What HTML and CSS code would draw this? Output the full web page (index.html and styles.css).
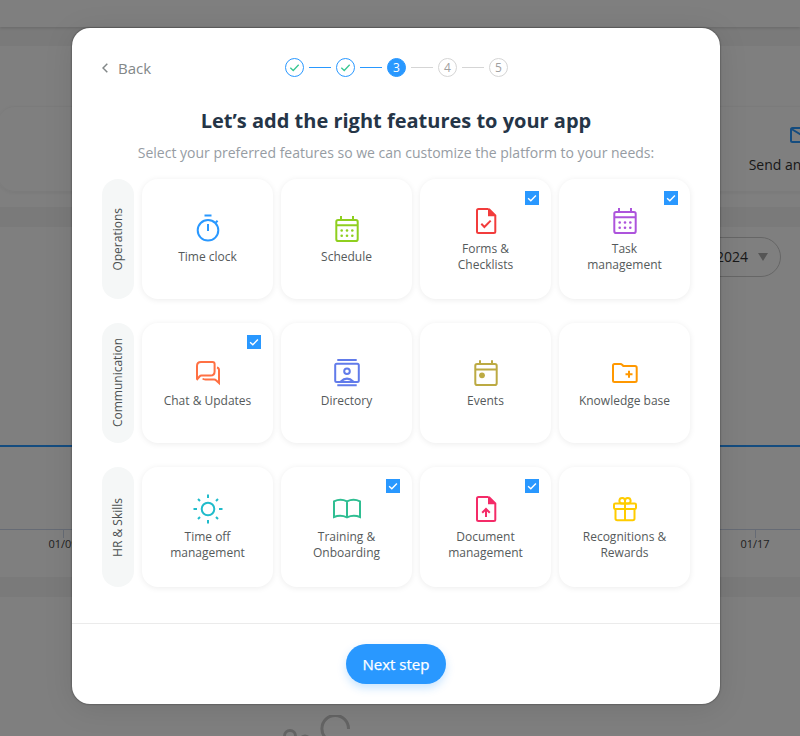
FILE: index.html
```
<!DOCTYPE html>
<html lang="en">
<head>
<meta charset="utf-8">
<title>Features</title>
<link rel="stylesheet" href="styles.css">
</head>
<body>
<svg width="0" height="0" class="defs">
  <symbol id="calendar" viewBox="0 0 32 32"><rect x="5.3" y="7" width="21.4" height="21" rx="1.8"/><path d="M5 12.3H27M10 3v4M22 3v4"/><g class="solid"><circle cx="10.7" cy="17.5" r="1.3"/><circle cx="16" cy="17.5" r="1.3"/><circle cx="21.3" cy="17.5" r="1.3"/><circle cx="10.7" cy="22.8" r="1.3"/><circle cx="16" cy="22.8" r="1.3"/><circle cx="21.3" cy="22.8" r="1.3"/></g></symbol>
  <symbol id="page" viewBox="0 0 32 32"><path d="M18.5 4H8.5Q7 4 7 5.500V26.500Q7 28 8.500 28H23.800Q25.300 28 25.300 26.500V10.500L18.800 4"/><path class="solid" d="M18 3.200L26.200 11.200H18Z"/></symbol>
  <symbol id="tick" viewBox="0 0 14 14"><path d="M3.100 7.300L5.800 9.800L10.900 4.400"/></symbol>
</svg>

<div class="app">
  <div class="topbar"></div>
  <section class="quick">
    <div class="panel left"></div>
    <div class="panel right">
      <svg width="28" height="20" viewBox="0 0 28 20"><rect x="1" y="3" width="24" height="14" rx="1.500"/><path d="M1.500 4L13 11L24.500 4"/></svg>
      <span>Send an update</span>
    </div>
  </section>
  <section class="chart">
    <div class="date"><span>01/17/2024</span><i></i></div>
    <div class="series"></div>
    <div class="axis"><span class="mark first">01/09</span><span class="mark last">01/17</span></div>
  </section>
  <section class="empty">
    <svg width="90" height="60" viewBox="0 0 90 60"><path d="M68.500 14A13.300 13.300 0 1 0 55 27"/><circle cx="10" cy="21" r="5.500"/><circle cx="25" cy="26" r="5"/></svg>
  </section>
</div>

<div class="overlay">
  <main class="modal">
    <header class="head">
      <a class="back"><svg width="6" height="10" viewBox="0 0 6 10"><path d="M5.300 .8L1 5L5.300 9.200"/></svg>Back</a>
      <div class="steps">
        <span class="step done"><svg width="15" height="15"><use href="#tick"/></svg></span><i class="link on"></i>
        <span class="step done"><svg width="15" height="15"><use href="#tick"/></svg></span><i class="link on"></i>
        <span class="step now">3</span><i class="link"></i>
        <span class="step">4</span><i class="link"></i>
        <span class="step">5</span>
      </div>
    </header>
    <h1>Let’s add the right features to your app</h1>
    <p class="lead">Select your preferred features so we can customize the platform to your needs:</p>

    <div class="groups">
      <div class="group">
        <div class="label"><span>Operations</span></div>
        <div class="card"><svg class="icon blue" viewBox="0 0 32 32"><circle cx="16" cy="17.300" r="10.300"/><path d="M12.500 2.500h7M16 11v7M23.800 9.500l1.800-1.800"/></svg><span>Time clock</span></div>
        <div class="card"><svg class="icon green"><use href="#calendar"/></svg><span>Schedule</span></div>
        <div class="card"><b class="check"><svg width="14" height="14"><use href="#tick"/></svg></b><svg class="icon red" viewBox="0 0 32 32"><use href="#page"/><path d="M11.300 18.800L14.400 22L20.700 15.600"/></svg><span>Forms &amp;<br>Checklists</span></div>
        <div class="card"><b class="check"><svg width="14" height="14"><use href="#tick"/></svg></b><svg class="icon purple"><use href="#calendar"/></svg><span>Task<br>management</span></div>
      </div>
      <div class="group">
        <div class="label"><span>Communication</span></div>
        <div class="card"><b class="check"><svg width="14" height="14"><use href="#tick"/></svg></b><svg class="icon coral" viewBox="0 0 32 32"><path d="M5 21.800V9Q5 5 9 5H20.500Q22.600 5 22.600 7V14.500Q22.600 18.600 18.500 18.600H9.500Q8.300 18.600 7.500 19.500L5.300 22.200ZM25 10.500Q27 11 27 13V26L24 23.200Q23.300 22.500 22.300 22.500H13.500Q11.500 22.500 10.700 21.500"/></svg><span>Chat &amp; Updates</span></div>
        <div class="card"><svg class="icon indigo" viewBox="0 0 32 32"><rect x="4.200" y="6.700" width="23.600" height="18.300" rx="1.500"/><path d="M6.300 3H25.700M6.300 28.300H25.700M9.500 24.800Q16 18.500 22.500 24.800"/><circle cx="16" cy="14.300" r="2.800"/></svg><span>Directory</span></div>
        <div class="card"><svg class="icon olive" viewBox="0 0 32 32"><rect x="5.300" y="7" width="21.400" height="21" rx="1.800"/><path d="M5 12.500H27M10 3.300v4M22 3.300v4"/><circle class="solid" cx="12" cy="18.300" r="2.900"/></svg><span>Events</span></div>
        <div class="card"><svg class="icon orange" viewBox="0 0 32 32"><path d="M5.500 7H11.500Q12.500 7 13.200 7.800L14.300 9H26Q27.700 9 27.700 10.700V23.500Q27.700 25 26 25H5.500Q4 25 4 23.500V8.500Q4 7 5.500 7ZM20 13.800v7M16.500 17.300h7"/></svg><span>Knowledge base</span></div>
      </div>
      <div class="group">
        <div class="label"><span>HR &amp; Skills</span></div>
        <div class="card"><svg class="icon teal" viewBox="0 0 32 32"><circle cx="16" cy="16" r="6.300"/><path d="M16 1.500v3.500M16 27v3.500M1.500 16h3.500M27 16h3.500M6 6l2 2M24 24l2 2M6 26l2-2M24 8l2-2"/></svg><span>Time off<br>management</span></div>
        <div class="card"><b class="check"><svg width="14" height="14"><use href="#tick"/></svg></b><svg class="icon mint" viewBox="0 0 32 32"><path d="M16 8.300Q9.500 5.300 3 8.300V24Q9.500 21.300 16 24.300Q22.500 21.300 29 24V8.300Q22.500 5.300 16 8.300V24.300"/></svg><span>Training &amp;<br>Onboarding</span></div>
        <div class="card"><b class="check"><svg width="14" height="14"><use href="#tick"/></svg></b><svg class="icon pink" viewBox="0 0 32 32"><use href="#page"/><path d="M16 24V16.500M12.200 19.800L16 16L19.800 19.800"/></svg><span>Document<br>management</span></div>
        <div class="card"><svg class="icon yellow" viewBox="0 0 32 32"><rect x="5" y="10.500" width="22" height="5.500" rx="1.300"/><path d="M6.500 16V25.500Q6.500 27.200 8.200 27.200H23.800Q25.500 27.200 25.500 25.500V16M16 10.500V27M16 10.500H12.800A2.800 2.800 0 1 1 16 7.700ZM16 10.500H19.200A2.800 2.800 0 1 0 16 7.700Z"/></svg><span>Recognitions &amp;<br>Rewards</span></div>
      </div>
    </div>
    <footer class="foot"><button class="next">Next step</button></footer>
  </main>
</div>
</body>
</html>
```
FILE: styles.css
```
* { box-sizing: border-box; }
html, body { margin: 0; height: 736px; overflow: hidden; }
body { font-family: "Open Sans", "Noto Sans", sans-serif; background: #f4f4f4; color: #333; }
svg { display: block; fill: none; stroke: currentColor; }
.defs { position: absolute; }
.solid { fill: currentColor; stroke: none; }

.app { height: 736px; overflow: hidden; display: flex; flex-direction: column; gap: 20px; }
.topbar { height: 27px; flex: none; background: #fff; box-shadow: 0 1px 3px rgba(0,0,0,.15); margin-bottom: -1px; }
.quick { height: 161px; flex: none; background: #fff; padding-top: 60px; display: flex; justify-content: space-between; overflow: hidden; }
.panel { height: 86px; border: 1px solid #f7f7f7; box-shadow: 0 1px 4px rgba(0,0,0,.06); font-size: 14px; }
.panel.left { width: 300px; margin-left: -3px; border-radius: 18px; }
.panel.right { width: 200px; margin-right: -100px; display: flex; flex-direction: column; align-items: center; gap: 10px; padding-top: 18px; white-space: nowrap; }
.panel.right svg { color: #2998ff; stroke-width: 2; margin-left: 7px; }
.chart { height: 350px; flex: none; background: #fff; padding-top: 10px; display: flex; flex-direction: column; }
.date { align-self: flex-end; width: 180px; height: 40px; margin-right: 19px; border: 1px solid #ccc; border-radius: 20px; display: flex; align-items: center; justify-content: flex-end; gap: 10px; padding: 0 12px 2px 0; font-size: 14px; }
.date i { border: 5px solid transparent; border-top: 8px solid #aaa; border-bottom: 0; margin-top: 2px; }
.series { height: 2px; margin-top: 168px; background: #2998ff; }
.axis { margin-top: 82px; border-top: 1px solid #ccd6eb; display: flex; justify-content: space-between; font-size: 11px; color: #444; }
.mark { width: 40px; text-align: center; line-height: 14px; }
.mark::before { content: ""; display: block; width: 1px; height: 8px; margin: 0 auto -1px; background: #ccd6eb; }
.mark.first { margin-left: 43px; }
.mark.last { margin-right: 25px; }
.empty { flex: 1; min-height: 0; overflow: hidden; background: #fff; padding: 118px 0 0 280px; color: #c8c8c8; }
.empty svg { stroke-width: 3; }

.overlay { position: absolute; inset: 0; background: rgba(0,0,0,.5); padding: 28px 0 0 72px; }
.modal { width: 648px; height: 676px; background: #fff; border-radius: 18px; box-shadow: 0 0 2px rgba(0,0,0,.6), 0 4px 30px rgba(0,0,0,.1); display: flex; flex-direction: column; }
.head { padding: 30px 30px 0; height: 50px; display: grid; grid-template-columns: 1fr auto 1fr; }
.back { display: flex; align-items: center; gap: 10px; height: 20px; font-size: 15px; color: #828788; }
.back svg { stroke-width: 1.5; }
.steps { display: flex; align-items: center; gap: 5px; height: 19px; margin-left: 1px; }
.step { width: 19px; height: 19px; border: 1px solid #d5d5d5; border-radius: 50%; display: flex; align-items: center; justify-content: center; font-size: 12px; line-height: 17px; color: #a0a0a0; }
.done { border-color: #2998ff; color: #35c792; }
.step svg { stroke-width: 1.2; }
.now { border-color: #2998ff; background: #2998ff; color: #fff; font-weight: 500; }
.link { width: 22px; height: 1px; background: #d5d5d5; }
.link.on { background: #2998ff; }
h1 { margin: 28px 0 0; font-size: 20px; line-height: 30px; font-weight: 700; text-align: center; color: #253547; }
.lead { margin: 7px 0 0; font-size: 14px; line-height: 20px; text-align: center; color: #969ca3; }
.groups { margin: 16px 30px 0; display: grid; gap: 24px; }
.group { height: 120px; display: grid; grid-template-columns: 32px repeat(4, 131px); gap: 8px; }
.label { display: flex; align-items: center; justify-content: center; padding-right: 2px; border-radius: 16px; background: #f5f7f7; font-size: 12px; color: #4c5152; }
.label span { writing-mode: vertical-rl; transform: rotate(180deg); }
.card { position: relative; border-radius: 16px; box-shadow: 0 1px 6px rgba(0,0,0,.08); display: flex; flex-direction: column; align-items: center; justify-content: center; gap: 4px; font-size: 12px; line-height: 16px; text-align: center; color: #555a5b; }
.icon { width: 32px; height: 32px; stroke-width: 2; }
.check { position: absolute; top: 12px; right: 12px; width: 14px; height: 14px; background: #2998ff; color: #fff; }
.check svg { stroke-width: 1.4; }
.blue { color: #2998ff; }
.green { color: #8fcf1f; }
.red { color: #f23c3c; }
.purple { color: #ad54dc; }
.coral { color: #ff7043; }
.indigo { color: #617bea; }
.olive { color: #bcaa43; }
.orange { color: #ff9800; }
.teal { color: #20bccb; }
.mint { color: #2fbe92; }
.pink { color: #f42b68; }
.yellow { color: #ffcc00; }
.foot { margin-top: 36px; border-top: 1px solid #ebebeb; padding-top: 20px; display: flex; justify-content: center; }
.next { width: 100px; height: 40px; border: 0; border-radius: 20px; padding: 0; background: #2998ff; color: #fff; font: 500 15px "Open Sans", sans-serif; -webkit-text-stroke: .25px #fff; box-shadow: 0 4px 8px rgba(41,152,255,.25); }
```
